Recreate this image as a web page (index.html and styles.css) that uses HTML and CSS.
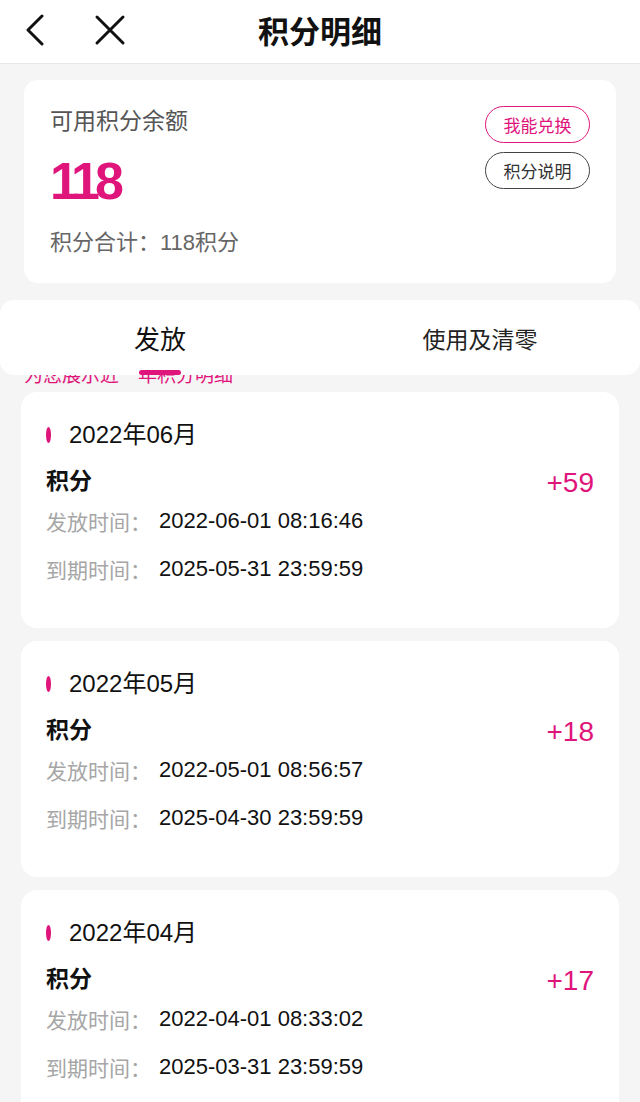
FILE: index.html
```html
<!DOCTYPE html>
<html lang="zh-CN">
<head>
<meta charset="utf-8">
<title>积分明细</title>
<link rel="stylesheet" href="styles.css">
</head>
<body>
<header class="topbar">
  <div class="nav-icons">
    <svg class="icon-back" width="20" height="32" viewBox="0 0 20 32" aria-hidden="true"><path d="M17 2 L3 16 L17 30" fill="none" stroke="#111" stroke-width="3" stroke-linecap="round" stroke-linejoin="round"/></svg>
    <svg class="icon-close" width="32" height="32" viewBox="0 0 32 32" aria-hidden="true"><path d="M3 3 L29 29 M29 3 L3 29" fill="none" stroke="#111" stroke-width="3" stroke-linecap="round"/></svg>
  </div>
  <h1 class="title">积分明细</h1>
  <div></div>
</header>

<main class="page">
  <section class="summary">
    <div class="summary-main">
      <div class="summary-label">可用积分余额</div>
      <div class="summary-value">118</div>
      <div class="summary-total">积分合计：118积分</div>
    </div>
    <div class="summary-actions">
      <button class="pill pill-pink">我能兑换</button>
      <button class="pill pill-dark">积分说明</button>
    </div>
  </section>

  <nav class="tabs">
    <div class="tab tab-active"><span class="tab-text">发放</span><span class="tab-bar"></span></div>
    <div class="tab"><span class="tab-text">使用及清零</span></div>
  </nav>
  <div class="tip">为您展示近一年积分明细</div>

  <section class="record">
    <div class="record-month"><span class="dot"></span>2022年06月</div>
    <div class="record-head"><span class="record-name">积分</span><span class="record-amount">+59</span></div>
    <div class="record-row first"><span class="label">发放时间：</span><span class="value">2022-06-01 08:16:46</span></div>
    <div class="record-row"><span class="label">到期时间：</span><span class="value">2025-05-31 23:59:59</span></div>
  </section>

  <section class="record">
    <div class="record-month"><span class="dot"></span>2022年05月</div>
    <div class="record-head"><span class="record-name">积分</span><span class="record-amount">+18</span></div>
    <div class="record-row first"><span class="label">发放时间：</span><span class="value">2022-05-01 08:56:57</span></div>
    <div class="record-row"><span class="label">到期时间：</span><span class="value">2025-04-30 23:59:59</span></div>
  </section>

  <section class="record">
    <div class="record-month"><span class="dot"></span>2022年04月</div>
    <div class="record-head"><span class="record-name">积分</span><span class="record-amount">+17</span></div>
    <div class="record-row first"><span class="label">发放时间：</span><span class="value">2022-04-01 08:33:02</span></div>
    <div class="record-row"><span class="label">到期时间：</span><span class="value">2025-03-31 23:59:59</span></div>
  </section>
</main>
</body>
</html>
```
FILE: styles.css
```css
* { box-sizing: border-box; }
html, body { margin: 0; padding: 0; }
body {
  width: 640px;
  height: 1102px;
  overflow: hidden;
  background: #f5f5f5;
  font-family: "Liberation Sans", "Noto Sans CJK SC", sans-serif;
  color: #1a1a1a;
}

.topbar {
  height: 64px;
  background: #fff;
  border-bottom: 1px solid #e6e6e6;
  display: grid;
  grid-template-columns: 1fr auto 1fr;
  align-items: center;
  padding-bottom: 4px;
}
.nav-icons {
  display: flex;
  align-items: center;
  gap: 49px;
  padding-left: 25px;
}
.title {
  margin: 0;
  font-family: "Noto Sans CJK SC", sans-serif;
  font-size: 31px;
  font-weight: 700;
  line-height: 36px;
  color: #111;
}

.page { padding-top: 16px; }

.summary {
  margin: 0 24px;
  background: #fff;
  border-radius: 14px;
  padding: 26px 26px 29px 26px;
  display: flex;
  justify-content: space-between;
  align-items: flex-start;
}
.summary-main { padding-top: 1px; }
.summary-label {
  height: 24px;
  font-family: "Noto Sans CJK SC", sans-serif;
  font-size: 23px;
  line-height: 24px;
  color: #555;
}
.summary-value {
  margin-top: 24px;
  height: 53px;
  font-size: 52px;
  line-height: 53px;
  font-weight: 700;
  color: #e0157c;
  letter-spacing: -5px;
}
.summary-total {
  margin-top: 24px;
  height: 22px;
  font-size: 22px;
  line-height: 22px;
  color: #666;
}
.summary-actions {
  display: flex;
  flex-direction: column;
  gap: 9px;
}
.pill {
  width: 105px;
  height: 37px;
  border-radius: 19px;
  background: #fff;
  font-family: "Noto Sans CJK SC", sans-serif;
  font-size: 17px;
  padding: 0;
  line-height: 1;
}
.pill-pink { border: 1.5px solid #e0157c; color: #e0157c; }
.pill-dark { border: 1.5px solid #444; color: #333; }

.tabs {
  position: relative;
  z-index: 1;
  margin-top: 17px;
  height: 75px;
  background: #fff;
  border-radius: 14px;
  display: flex;
}
.tab {
  flex: 1;
  display: flex;
  flex-direction: column;
  align-items: center;
  padding-top: 22px;
}
.tab-text {
  height: 32px;
  font-family: "Noto Sans CJK SC", sans-serif;
  font-size: 23px;
  line-height: 32px;
  color: #222;
}
.tab-active .tab-text { font-size: 26px; color: #111; }
.tab-bar {
  margin-top: 16px;
  width: 42px;
  height: 6px;
  border-radius: 3px;
  background: #e0157c;
}

.tip {
  margin: -11px 0 9px 0;
  height: 19px;
  padding-left: 24px;
  font-family: "Noto Sans CJK SC", sans-serif;
  font-size: 19px;
  line-height: 19px;
  color: #e0157c;
}

.record {
  margin: 0 21px 13px 21px;
  background: #fff;
  border-radius: 16px;
  padding: 28px 25px 44px 25px;
}
.record-month {
  height: 30px;
  display: flex;
  align-items: center;
  font-size: 24px;
  line-height: 30px;
  color: #111;
}
.dot {
  width: 5px;
  height: 16px;
  border-radius: 50%;
  background: #e0157c;
  margin-right: 18px;
}
.record-head {
  margin-top: 14px;
  height: 30px;
  display: flex;
  justify-content: space-between;
  align-items: flex-start;
}
.record-name {
  height: 30px;
  font-family: "Noto Sans CJK SC", sans-serif;
  font-size: 23px;
  line-height: 30px;
  font-weight: 700;
  color: #111;
}
.record-amount {
  height: 30px;
  margin-top: 4px;
  font-size: 28px;
  line-height: 30px;
  color: #e0157c;
}
.record-row {
  margin-top: 18px;
  height: 30px;
  display: flex;
  align-items: center;
  font-size: 22px;
  line-height: 30px;
}
.record-row.first { margin-top: 12px; }
.label {
  width: 113px;
  font-family: "Noto Sans CJK SC", sans-serif;
  font-size: 21px;
  color: #a6a6a6;
}
.value { color: #111; }
```
